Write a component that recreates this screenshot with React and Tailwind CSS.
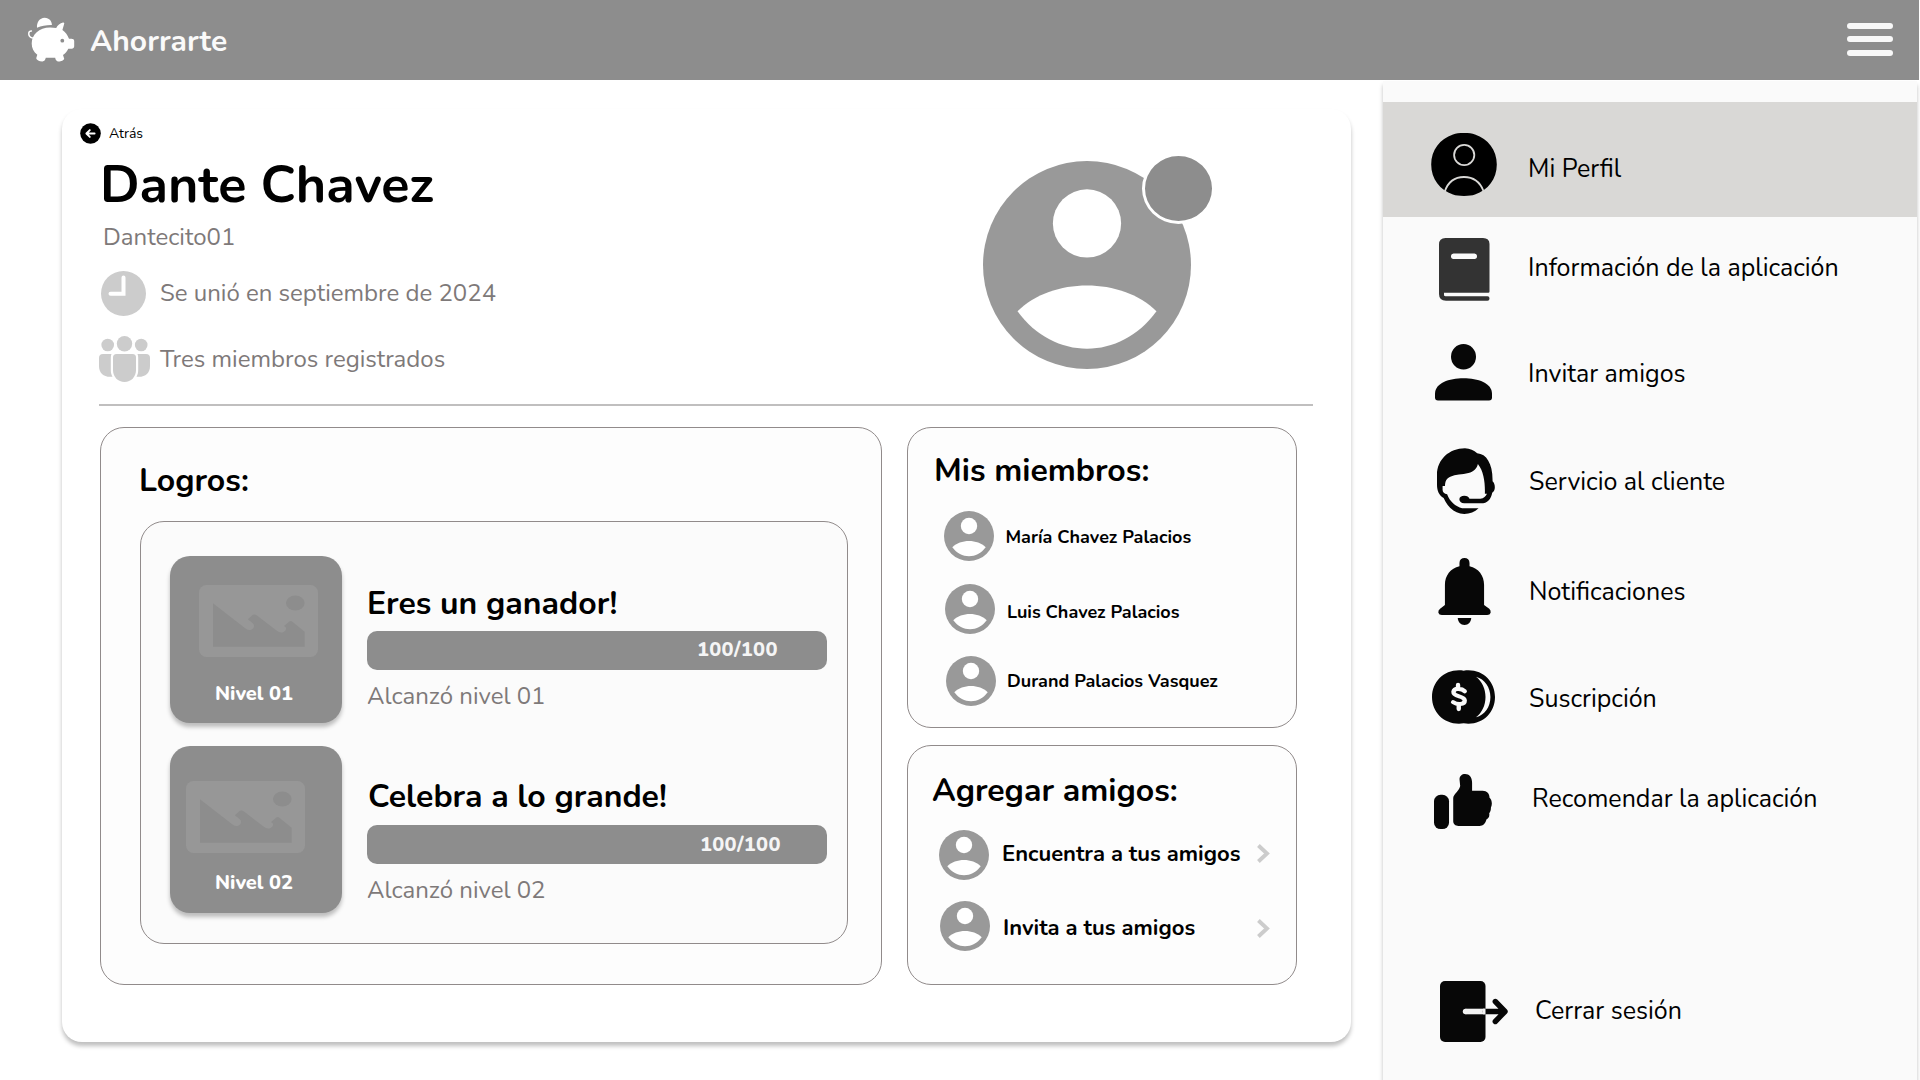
import React from 'react';

function PiggyIcon() {
  return (
    <svg className="mt-[-1px] h-[46px] w-[48px]" viewBox="27 16.5 48 46" fill="#fff">
      <path d="M37 27.3C36.6 22 39.5 17.5 44.6 17.3C49.5 17.4 52 21 51.9 24.6C46.5 24.5 41.5 25.3 37 27.3Z" />
      <path d="M31.7 43C31.7 34 39 26.9 50 26.9C52.3 26.9 54.3 27.1 56.2 27.6C57.6 24.7 60 22.6 63 22C64.4 21.8 64.5 22.8 64 24L62.4 29.6C65.4 31.8 67.7 34.8 69 38.2H71.5C73 38.2 74.2 39 74.2 40.5V45.7C74.2 47.4 73 48.3 71.5 48.2H68.3C67.2 50.8 65.4 53 63 54.5L64.2 58.3C64 60.2 60 61.3 57.8 60.9C56 60.3 55.5 59 55.2 57.3H45.8C45.2 59.5 44.3 60.9 42.5 60.9C39.5 61 36.6 59.8 36.2 57.8L37.3 54.3C33.6 51.5 31.7 47.7 31.7 43Z" />
      <path d="M32.5 37.5C29.5 37.4 28.6 34.5 28.8 32.5C29 31 30.2 30.6 31.4 30.6" fill="none" stroke="#fff" strokeWidth="1.5" strokeLinecap="round" />
      <circle cx="62.3" cy="40.2" r="1.9" fill="#8d8d8d" />
    </svg>
  );
}

function Avatar({ className }) {
  return (
    <svg className={className} viewBox="2 2 20 20">
      <circle cx="12" cy="12" r="10" fill="#999" />
      <circle cx="12" cy="8" r="3.28" fill="#fff" />
      <path d="M5.32 16.45C8.6 13.13 15.4 13.13 18.68 16.45C15.2 21.25 8.8 21.25 5.32 16.45Z" fill="#fff" />
    </svg>
  );
}

function PictureIcon({ className }) {
  return (
    <svg className={className} viewBox="0 0 119 72">
      <rect width="119" height="72" rx="7.5" fill="#979797" />
      <ellipse cx="96.3" cy="18" rx="9.3" ry="7.4" fill="#8d8d8d" />
      <path
        d="M14 18.3L46.5 43.5Q51 46.5 54 43.5Q56.5 40.5 53.5 38L48.8 34.2L52.5 31Q55 28.3 58 30.5L77.5 45.5Q81 48.5 84.5 47Q88 44.8 86.8 42.5L85 41L90 36.7Q92 35 94 37.2L105.7 46.7V61.7H14Z"
        fill="#8d8d8d"
      />
    </svg>
  );
}

function Chevron({ className }) {
  return (
    <svg className={className} viewBox="0 0 13 19" fill="none" stroke="#ccc" strokeWidth="3.9">
      <path d="M1.4 1.5L10 9.5L1.4 17.5" />
    </svg>
  );
}

const profileIcon = (
  <svg className="h-[63px] w-[66px]" viewBox="0 0 66 63">
    <path d="M33 0C38 0 41 .4 44 1.6C57 6 65.8 17 65.8 31.5C65.8 46 57 57 44 61.6C41 62.7 38 63 33 63C28 63 25 62.7 22 61.6C9 57 .2 46 .2 31.5C.2 17 9 6 22 1.6C25 .4 28 0 33 0Z" fill="#000" />
    <circle cx="33.2" cy="22" r="10.1" fill="none" stroke="#d9d8d6" strokeWidth="1.8" />
    <path d="M13.8 58.5C17 49 24 44 33 44C42 44 49 49 52.5 58" fill="none" stroke="#d9d8d6" strokeWidth="1.8" />
  </svg>
);

const bookIcon = (
  <svg className="h-[63px] w-[51px]" viewBox="0 0 51 63">
    <path fillRule="evenodd" d="M6.5 0H44Q50.5 0 50.5 6V53.5Q50.5 54.7 49.3 54.7H5V57.3Q5.3 58.3 6.5 58.3H48.5Q50.5 58.3 50.5 60.5T48.5 62.7H7Q0 62.5 0 56V6.5Q0 0 6.5 0ZM14.5 15.5A2.5 2.7 0 0 0 14.5 20.9H35.5A2.5 2.7 0 0 0 35.5 15.5Z" fill="#333" />
  </svg>
);

const personIcon = (
  <svg className="h-[57px] w-[57px]" viewBox="0 0 57 57" fill="#070707">
    <ellipse cx="28.5" cy="12.8" rx="12.5" ry="12.7" />
    <path d="M0 50C0 39 14 34.3 28.5 34.3S57 39 57 50V53.5Q57 56.5 54 56.5H3Q0 56.5 0 53.5Z" />
  </svg>
);

const agentIcon = (
  <svg className="h-[66px] w-[58px]" viewBox="190 55 166 198" preserveAspectRatio="none" fill="#070707">
    <path d="M190 135C190 90 225 56 270 56C284 57 296 62 305 71C332 73 350 103 349 155C353 159 355.5 165 355.5 173C355.5 180 353 186 348 189C345 208 334 221 316 221H268C259 221 254 216 254 209C254 202 260 198 268 198C276 198 281 201 283 207H314C324 206 330 199 333 192L327 192C328 160 324 125 307 103C304 117 295 126 280 130C262 135 243 134 228 141C217 146 213 155 213 169L206 169V180C206 188 211 192 219 194C226 215 243 231 262 236H309C298 247 284 253 268 253C241 252 222 234 209 205C196 196 190 184 190 165Z" />
  </svg>
);

const bellIcon = (
  <svg className="h-[67px] w-[53px]" viewBox="193 383 153 202" preserveAspectRatio="none" fill="#070707">
    <path d="M255 408V398C255 388 261 383 269.5 383S284 388 284 398V408C310 414 326 436 326 464V525L341 536Q346 540 345 548Q343 555 335 555H204Q196 555 194 548Q193 540 199 536L213 525V464C213 436 229 414 255 408Z" />
    <path d="M250 564H289C288 576 281 585 269.5 585S251 576 250 564Z" />
  </svg>
);

const coinsIcon = (
  <svg className="h-[54px] w-[63px]" viewBox="177 718 179 163" preserveAspectRatio="none">
    <path d="M267 720C318 712 356 750 356 799.5S318 887 267 879C216 887 177 849 177 799.5S216 712 267 720Z" fill="#070707" />
    <path d="M302 738C327 745 343 770 343 799.5S327 854 302 861C319 847 329 825 329 799.5S319 752 302 738Z" fill="#fafafa" />
    <path d="M251 763V772M253 827V836M270 782C263 775 240 770 238 784C237 800 270 795 270 810C270 824 248 823 237 815" fill="none" stroke="#fafafa" strokeWidth="12.5" strokeLinecap="round" strokeLinejoin="round" />
  </svg>
);

const thumbIcon = (
  <svg className="h-[55px] w-[58px]" viewBox="182 1032 166 164" preserveAspectRatio="none" fill="#070707">
    <rect x="182" y="1094" width="43" height="102" rx="19" />
    <path d="M257 1068L255 1048C255 1038 262 1032 271 1032C283 1032 291 1042 291 1058V1082H321C334 1082 341 1091 341 1103C347 1108 350 1121 345 1132C345 1140 343 1146 340 1149C342 1160 337 1164 332 1168C329 1180 323 1187 312 1187H252C243 1187 237 1181 237 1173V1104C237 1093 253 1084 257 1068Z" />
  </svg>
);

const exitIcon = (
  <svg className="h-[61px] w-[68px]" viewBox="0 0 68 61">
    <rect width="45.5" height="61" rx="5" fill="#070707" />
    <path d="M25.5 30.5H45.5" stroke="#f2f2f2" strokeWidth="5.6" />
    <circle cx="25.6" cy="30.5" r="2.8" fill="#f2f2f2" />
    <path d="M45.5 30.5H63M55.3 20.5L65 30.5L55.3 40.5" fill="none" stroke="#070707" strokeWidth="5.4" strokeLinecap="round" strokeLinejoin="round" />
    <path d="M43 27.7H45.5V33.3H43Z" fill="#f2f2f2" />
  </svg>
);

const menu = [
  { label: 'Mi Perfil', icon: profileIcon, row: 'h-[115px] bg-[#d9d8d6]', iconBox: 'w-[145px] pl-[47.5px] pt-[31px]', text: 'mt-[50px]' },
  { label: 'Información de la aplicación', icon: bookIcon, row: 'h-[103px]', iconBox: 'w-[145px] pl-[55.5px] pt-[21px]', text: 'mt-[34px]' },
  { label: 'Invitar amigos', icon: personIcon, row: 'h-[110px]', iconBox: 'w-[145px] pl-[52px] pt-[24px]', text: 'mt-[37px]' },
  { label: 'Servicio al cliente', icon: agentIcon, row: 'h-[110px]', iconBox: 'w-[146px] pl-[54px] pt-[18px]', text: 'mt-[35px]' },
  { label: 'Notificaciones', icon: bellIcon, row: 'h-[110px]', iconBox: 'w-[146px] pl-[55px] pt-[18px]', text: 'mt-[35px]' },
  { label: 'Suscripción', icon: coinsIcon, row: 'h-[105px]', iconBox: 'w-[146px] pl-[49px] pt-[19.5px]', text: 'mt-[32px]' },
  { label: 'Recomendar la aplicación', icon: thumbIcon, row: 'h-[105px]', iconBox: 'w-[149px] pl-[51px] pt-[19px]', text: 'mt-[27px]' },
  { label: 'Cerrar sesión', icon: exitIcon, row: 'mt-[100px] h-[120px]', iconBox: 'w-[152px] pl-[57px] pt-[21px]', text: 'mt-[34px]' },
];

const achievements = [
  { title: 'Eres un ganador!', level: 'Nivel 01', note: 'Alcanzó nivel 01', picture: 'ml-[29px] mt-[29px]', levelPos: 'mt-[22px]', info: 'pt-[27px]', heading: '', bar: 'mt-[6px] pb-[2px] pl-[330px]' },
  { title: 'Celebra a lo grande!', level: 'Nivel 02', note: 'Alcanzó nivel 02', picture: 'ml-[16px] mt-[35px]', levelPos: 'mt-[15px]', info: 'pt-[30px]', heading: 'pl-px', bar: 'mt-[7px] pl-[333px]' },
];

const members = [
  { name: 'María Chavez Palacios', row: 'mt-[20px] pl-[35.5px] gap-[12px]', text: 'mt-[14px]' },
  { name: 'Luis Chavez Palacios', row: 'mt-[23px] pl-[36.5px] gap-[12.5px]', text: 'mt-[16px]' },
  { name: 'Durand Palacios Vasquez', row: 'mt-[22px] pl-[37.5px] gap-[11.5px]', text: 'mt-[13px]' },
];

export default function App() {
  return (
    <div className="flex h-[1080px] w-[1920px] flex-col overflow-hidden bg-white font-['Nunito','Open_Sans',sans-serif] text-black">
      <header className="flex h-20 w-[1919px] shrink-0 items-center justify-between bg-[#8d8d8d] pl-[27px] pr-[26px]">
        <div className="flex items-center gap-[15px]">
          <PiggyIcon />
          <span className="pt-[3px] text-[30px] font-bold leading-[40px] text-[#fafafa]">Ahorrarte</span>
        </div>
        <div className="mb-px flex w-[46px] flex-col">
          <span className="h-[6px] rounded-full bg-[#f8f8f8]" />
          <span className="mt-[6.5px] h-[6px] rounded-full bg-[#f8f8f8]" />
          <span className="mt-[8.5px] h-[6px] rounded-full bg-[#f8f8f8]" />
        </div>
      </header>

      <div className="flex h-[1000px]">
        <main className="ml-[62px] mt-[29px] flex h-[933px] w-[1289px] shrink-0 flex-col rounded-[20px] bg-white shadow-[0_4px_4px_rgba(0,0,0,0.25)]">
          <section className="flex h-[295px] shrink-0">
            <div className="flex w-[921px] flex-col pt-[14px]">
              <div className="flex h-5 items-center gap-[8px] pl-[18px]">
                <svg className="h-[21px] w-[21px]" viewBox="0 0 21 21" fill="none">
                  <circle cx="10.5" cy="10.5" r="10.3" fill="#000" />
                  <path d="M14.6 10.5H6.7M9.8 7.1L6.4 10.5L9.8 13.9" stroke="#fff" strokeWidth="1.9" strokeLinecap="round" strokeLinejoin="round" />
                </svg>
                <span className="pt-[2px] text-[14px] leading-5">Atrás</span>
              </div>
              <h1 className="mt-[12px] pl-[38px] text-[52px] font-bold leading-[60px]">Dante Chavez</h1>
              <p className="mt-[7px] pl-[41px] text-[24px] leading-[30px] text-[#7e7979]">Dantecito01</p>
              <div className="mt-[19px] flex h-[45px] items-center gap-[14px] pl-[39px]">
                <svg className="h-[45px] w-[45px]" viewBox="0 0 45 45">
                  <circle cx="22.5" cy="22.5" r="22.5" fill="#ccc" />
                  <path d="M22.5 6.5V22.7H9.5" fill="none" stroke="#fff" strokeWidth="4" strokeLinecap="round" />
                </svg>
                <span className="pb-px text-[24px] leading-[30px] text-[#7e7979]">Se unió en septiembre de 2024</span>
              </div>
              <div className="mt-[20px] flex h-[46px] items-center gap-[10px] pl-[37px]">
                <svg className="h-[46px] w-[51px]" viewBox="0 0 51 46" fill="#ccc">
                  <circle cx="25.5" cy="7.8" r="7.7" />
                  <circle cx="8.7" cy="9" r="6.3" />
                  <circle cx="42.2" cy="9" r="6.3" />
                  <path d="M17.5 18H33.5Q37 18 37 21.5V34C37 41 32 46 25.5 46S14 41 14 34V21.5Q14 18 17.5 18Z" />
                  <path d="M4 18H12.5Q11.8 19.5 11.8 21.5V34C11.8 37 12.4 39 13.5 40.7C5.5 41.8 0 37.5 0 30V22Q0 18 4 18Z" />
                  <path d="M47 18H38.5Q39.2 19.5 39.2 21.5V34C39.2 37 38.6 39 37.5 40.7C45.5 41.8 51 37.5 51 30V22Q51 18 47 18Z" />
                </svg>
                <span className="text-[24px] leading-[30px] text-[#7e7979]">Tres miembros registrados</span>
              </div>
            </div>
            <div className="relative mt-[52px] h-[208px] w-[208px]">
              <Avatar className="h-[208px] w-[208px]" />
              <span className="absolute left-[159px] top-[-8px] h-[71px] w-[73px] rounded-[50%] border-[3px] border-white bg-[#8d8d8d]" />
            </div>
          </section>

          <div className="ml-[37px] h-[2px] w-[1214px] shrink-0 bg-[#c0bfbf]" />

          <div className="ml-[38px] mt-[21px] flex gap-[25px]">
            <section className="h-[558px] w-[782px] rounded-[24px] border border-[#918b8b] bg-[#fdfdfd] pl-[39px] pt-[33px]">
              <h2 className="ml-[-1px] h-10 text-[32px] font-bold leading-10">Logros:</h2>
              <div className="mt-[20px] flex h-[423px] w-[708px] flex-col gap-[23px] rounded-[24px] border border-[#918b8b] bg-[#fbfbfb] pl-[29px] pt-[34px]">
                {achievements.map((a) => (
                  <div key={a.title} className="flex gap-[25px]">
                    <div className="flex h-[167px] w-[172px] flex-col rounded-[20px] bg-[#8d8d8d] shadow-[0_4px_4px_rgba(0,0,0,0.25)]">
                      <div className={a.picture}>
                        <PictureIcon className="h-[72px] w-[119px]" />
                      </div>
                      <span className={`pl-[45px] text-[20px] font-extrabold leading-[30px] text-white ${a.levelPos}`}>{a.level}</span>
                    </div>
                    <div className={`w-[460px] ${a.info}`}>
                      <h3 className={`text-[32px] font-bold leading-[42px] ${a.heading}`}>{a.title}</h3>
                      <div className={`flex h-[39px] items-center rounded-[10px] bg-[#8d8d8d] text-[20px] font-extrabold tracking-[0.3px] text-[#f5f5f5] ${a.bar}`}>
                        100/100
                      </div>
                      <p className="mt-[11px] text-[24px] leading-[30px] text-[#7e7979]">{a.note}</p>
                    </div>
                  </div>
                ))}
              </div>
            </section>

            <div className="flex flex-col gap-[17px]">
              <section className="h-[301px] w-[390px] rounded-[24px] border border-[#918b8b] bg-[#fdfdfd] pt-[23px]">
                <h2 className="pl-[26px] text-[32px] font-bold leading-10">Mis miembros:</h2>
                {members.map((m) => (
                  <div key={m.name} className={`flex ${m.row}`}>
                    <Avatar className="h-[50px] w-[50px]" />
                    <span className={`text-[18px] font-bold leading-6 ${m.text}`}>{m.name}</span>
                  </div>
                ))}
              </section>

              <section className="h-[240px] w-[390px] rounded-[24px] border border-[#918b8b] bg-[#fdfdfd] pt-[25px]">
                <h2 className="pl-[24px] text-[32px] font-bold leading-10">Agregar amigos:</h2>
                <div className="mt-[18px] flex h-[50px] pl-[30.5px]">
                  <Avatar className="mt-[0.5px] h-[50px] w-[50px]" />
                  <span className="ml-[13.5px] mt-[11px] w-[255px] text-[22px] font-bold leading-[28px]">Encuentra a tus amigos</span>
                  <Chevron className="mt-[15px] h-[19px] w-[13px]" />
                </div>
                <div className="mt-[21px] flex h-[50px] pl-[31.5px]">
                  <Avatar className="mt-[0.5px] h-[50px] w-[50px]" />
                  <span className="ml-[13.5px] mt-[14px] w-[254px] text-[22px] font-bold leading-[28px]">Invita a tus amigos</span>
                  <Chevron className="mt-[19px] h-[19px] w-[13px]" />
                </div>
              </section>
            </div>
          </div>
        </main>

        <aside className="ml-[32px] mt-px w-[534px] shrink-0 bg-[#fafafa] pt-[21px] shadow-[0_4px_4px_rgba(0,0,0,0.25)]">
          <nav>
            {menu.map((m) => (
              <a key={m.label} className={`flex items-start ${m.row}`}>
                <span className={`block shrink-0 ${m.iconBox}`}>{m.icon}</span>
                <span className={`text-[25px] leading-[34px] ${m.text}`}>{m.label}</span>
              </a>
            ))}
          </nav>
        </aside>
      </div>
    </div>
  );
}
